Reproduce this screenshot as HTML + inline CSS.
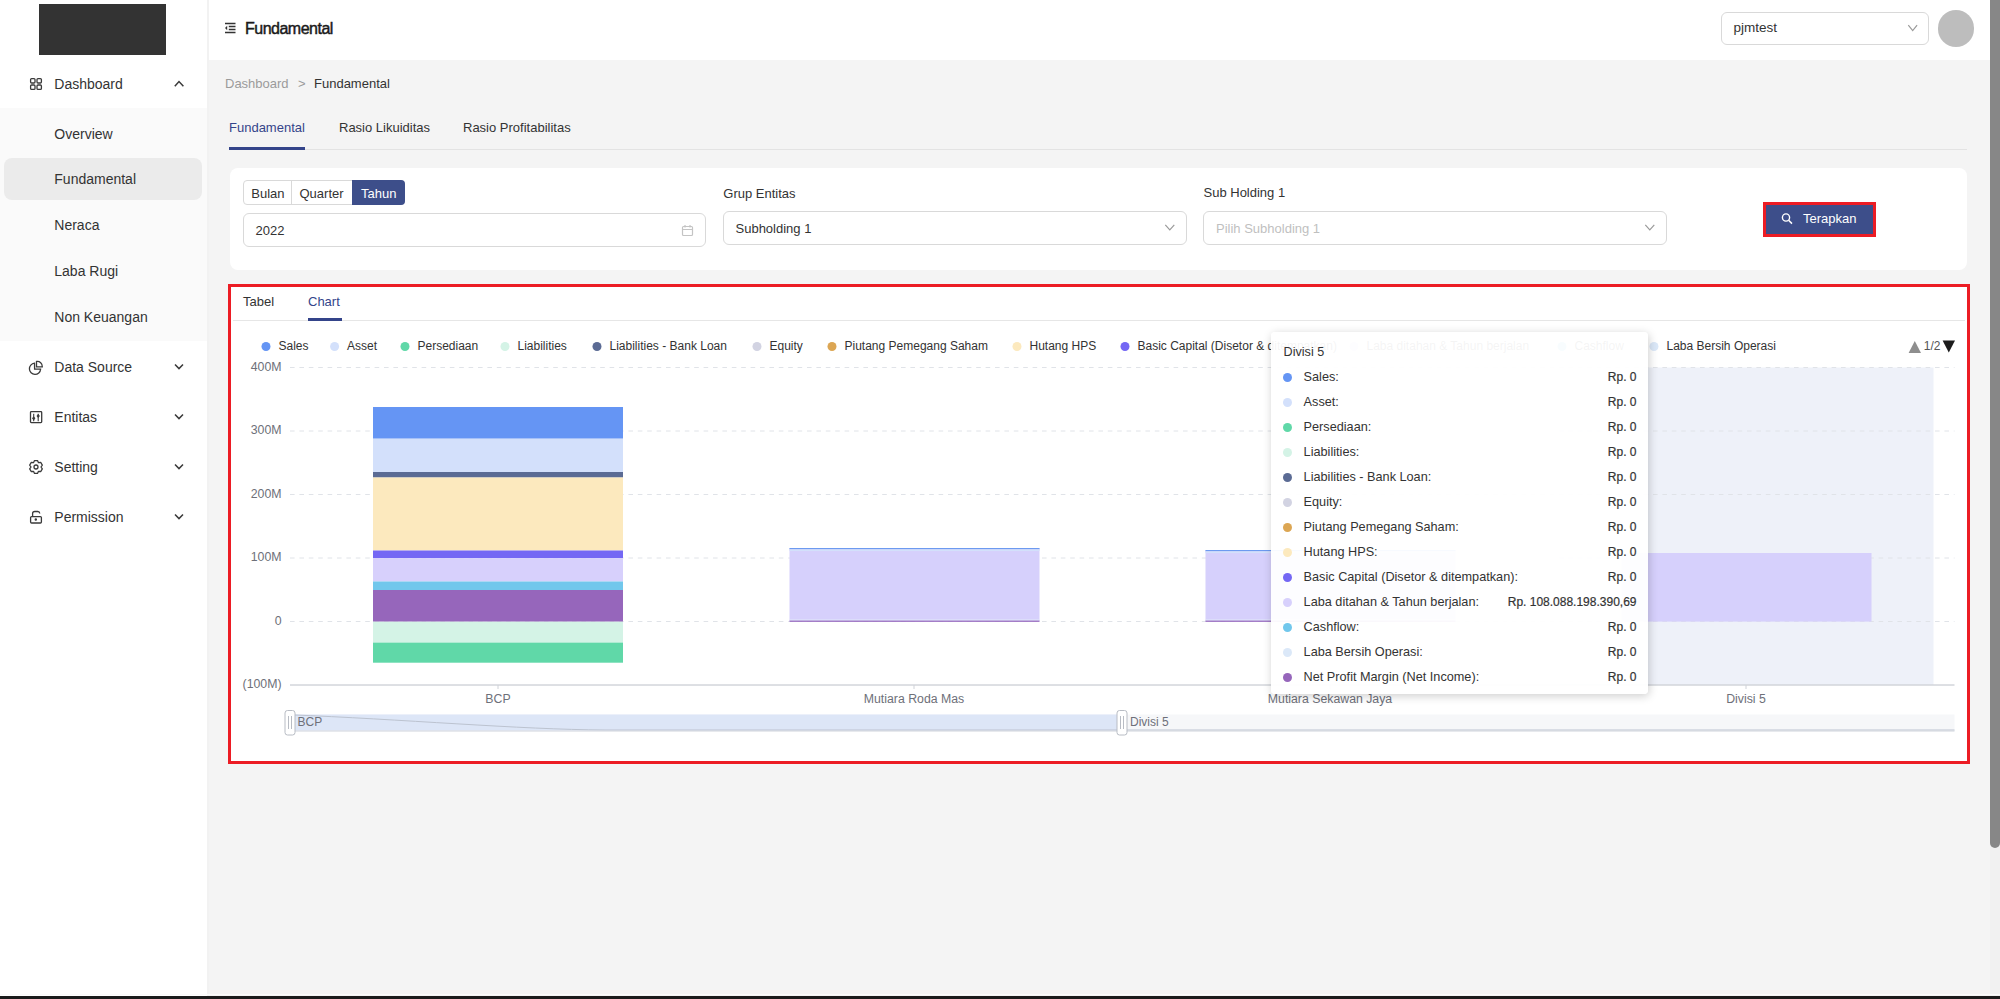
<!DOCTYPE html>
<html><head><meta charset="utf-8">
<style>
*{box-sizing:border-box;margin:0;padding:0}
html,body{width:2000px;height:999px;overflow:hidden;background:#f4f4f4;font-family:"Liberation Sans",sans-serif;color:#333}
.abs{position:absolute}
.t{position:absolute;white-space:nowrap;line-height:1}
svg{position:absolute;left:0;top:0;overflow:visible}
</style></head>
<body>
<div class="abs" style="left:0;top:0;width:207px;height:996px;background:#fff"></div>
<div class="abs" style="left:207px;top:0;width:2px;height:996px;background:#f2f2f2"></div>
<div class="abs" style="left:39px;top:4px;width:127px;height:51px;background:#333"></div>
<div class="abs" style="left:0;top:108px;width:207px;height:233px;background:#fafafa"></div>
<div class="abs" style="left:4px;top:158px;width:198px;height:42px;background:#ebebeb;border-radius:8px"></div>
<div class="abs" style="left:209px;top:0;width:1781px;height:60px;background:#fff"></div>
<div class="abs" style="left:1990px;top:0;width:10px;height:996px;background:#f1f1f1"></div>
<div class="abs" style="left:1990px;top:0;width:10px;height:848px;background:#878787;border-radius:0 0 5px 5px"></div>
<div class="abs" style="left:0;top:994px;width:2000px;height:1px;background:#fbfbfb"></div>
<div class="abs" style="left:0;top:995.5px;width:2000px;height:3.5px;background:#1b1b1b"></div>
<div class="t" style="left:54.3px;top:77.05px;font-size:14px;color:#333;">Dashboard</div>
<div class="t" style="left:54.3px;top:126.95px;font-size:14px;color:#333;">Overview</div>
<div class="t" style="left:54.3px;top:172.25px;font-size:14px;color:#333;">Fundamental</div>
<div class="t" style="left:54.3px;top:218.15px;font-size:14px;color:#333;">Neraca</div>
<div class="t" style="left:54.3px;top:263.75px;font-size:14px;color:#333;">Laba Rugi</div>
<div class="t" style="left:54.3px;top:310.25px;font-size:14px;color:#333;">Non Keuangan</div>
<div class="t" style="left:54.3px;top:359.65px;font-size:14px;color:#333;">Data Source</div>
<div class="t" style="left:54.3px;top:410.05px;font-size:14px;color:#333;">Entitas</div>
<div class="t" style="left:54.3px;top:460.05px;font-size:14px;color:#333;">Setting</div>
<div class="t" style="left:54.3px;top:510.15px;font-size:14px;color:#333;">Permission</div>
<svg width="2000" height="999">
  <g fill="none" stroke="#3a3a3a" stroke-width="1.3">
    <rect x="30.6" y="78.6" width="4.4" height="4.4" rx="1"/>
    <rect x="37" y="78.6" width="4.4" height="4.4" rx="1"/>
    <rect x="30.6" y="85" width="4.4" height="4.4" rx="1"/>
    <rect x="37" y="85" width="4.4" height="4.4" rx="1"/>
    <path d="M174.8 86.3 L179 81.6 L183.4 86.3" stroke-width="1.5"/>
    <path d="M175 364.5 L179 368.6 L183 364.5" stroke-width="1.5"/>
    <path d="M175 414.5 L179 418.6 L183 414.5" stroke-width="1.5"/>
    <path d="M175 464.5 L179 468.6 L183 464.5" stroke-width="1.5"/>
    <path d="M175 514.5 L179 518.6 L183 514.5" stroke-width="1.5"/>
    <path d="M34.5 363.2 A5.6 5.6 0 1 0 40.6 369.2 L34.6 369.2 Z"/>
    <path d="M36.5 361.5 A5 5 0 0 1 42.3 366.8 L36.5 366.8 Z"/>
    <rect x="30.5" y="411.6" width="11.2" height="11" rx="0.8"/>
    <path d="M33.7 413.8 V421.2 M38.2 413.8 V421.2" stroke-width="1.1"/>
    <path d="M33.7 416.2 L35.4 418.3 L33.7 420.4 L32 418.3 Z M38.2 413.9 L39.9 416 L38.2 418.1 L36.5 416 Z" fill="#3a3a3a" stroke="none"/>
    <path d="M33.50 462.67 L34.52 460.57 L37.48 460.57 L38.50 462.67 L40.83 462.50 L42.31 465.07 L41.00 467.00 L42.31 468.93 L40.83 471.50 L38.50 471.33 L37.48 473.43 L34.52 473.43 L33.50 471.33 L31.17 471.50 L29.69 468.93 L31.00 467.00 L29.69 465.07 L31.17 462.50 Z" stroke-linejoin="round"/>
    <circle cx="36" cy="467" r="2"/>
    <path d="M32.6 516.6 V513.6 Q32.6 511.5 34.8 511.5 H37.8 Q39.6 511.5 39.8 513.5"/>
    <rect x="30.6" y="516.6" width="10.8" height="6.4" rx="1"/>
    <circle cx="35.8" cy="519.6" r="0.6" fill="#3a3a3a"/>
    <path d="M225 23.5 H235.5 M228.8 26.5 H235.5 M228.8 29.5 H235.5 M225 32.5 H235.5" stroke="#333" stroke-width="1.4"/>
    <path d="M227.2 25.8 L225 28 L227.2 30.2 Z" fill="#333" stroke="none"/>
  </g>
</svg>
<div class="t" style="left:245px;top:20.66px;font-size:16px;color:#1a1a1a;letter-spacing:-0.5px;-webkit-text-stroke:0.45px #1a1a1a;">Fundamental</div>
<div class="abs" style="left:1721px;top:12px;width:208px;height:33px;background:#fff;border:1px solid #d9d9d9;border-radius:6px"></div>
<div class="t" style="left:1733.5px;top:20.97px;font-size:13.5px;color:#333;">pjmtest</div>
<div class="abs" style="left:1937.7px;top:10.4px;width:36.4px;height:36.4px;border-radius:50%;background:#bdbdbd"></div>
<div class="t" style="left:225px;top:77.00px;font-size:13px;color:#9b9b9b;">Dashboard</div>
<div class="t" style="left:298px;top:77.00px;font-size:13px;color:#9b9b9b;">&gt;</div>
<div class="t" style="left:314px;top:77.00px;font-size:13px;color:#333;">Fundamental</div>
<div class="abs" style="left:229px;top:149px;width:1738px;height:1px;background:#e3e3e3"></div>
<div class="abs" style="left:229px;top:147px;width:76px;height:3px;background:#34448a"></div>
<div class="t" style="left:229px;top:121.00px;font-size:13px;color:#34448a;">Fundamental</div>
<div class="t" style="left:339px;top:121.00px;font-size:13px;color:#333;">Rasio Likuiditas</div>
<div class="t" style="left:463px;top:121.00px;font-size:13px;color:#333;">Rasio Profitabilitas</div>
<div class="abs" style="left:230px;top:168px;width:1737px;height:102px;background:#fff;border-radius:8px"></div>
<div class="abs" style="left:243px;top:180px;width:162px;height:25px;border:1px solid #d9d9d9;border-radius:4px;background:#fff"></div>
<div class="abs" style="left:291px;top:180px;width:1px;height:25px;background:#d9d9d9"></div>
<div class="abs" style="left:352px;top:180px;width:53px;height:25px;background:#3d4e8a;border-radius:0 4px 4px 0"></div>
<div class="t" style="left:251.3px;top:186.50px;font-size:13px;color:#333;">Bulan</div>
<div class="t" style="left:299.5px;top:186.50px;font-size:13px;color:#333;">Quarter</div>
<div class="t" style="left:361px;top:186.50px;font-size:13px;color:#fff;">Tahun</div>
<div class="abs" style="left:243px;top:213px;width:463px;height:34px;background:#fff;border:1px solid #d9d9d9;border-radius:6px"></div>
<div class="t" style="left:255.5px;top:224.00px;font-size:13px;color:#333;">2022</div>
<div class="t" style="left:723.3px;top:186.50px;font-size:13px;color:#333;">Grup Entitas</div>
<div class="abs" style="left:723px;top:211px;width:464px;height:34px;background:#fff;border:1px solid #d9d9d9;border-radius:6px"></div>
<div class="t" style="left:735.5px;top:222.00px;font-size:13px;color:#333;">Subholding 1</div>
<div class="t" style="left:1203.5px;top:186.30px;font-size:13px;color:#333;">Sub Holding 1</div>
<div class="abs" style="left:1203px;top:211px;width:464px;height:34px;background:#fff;border:1px solid #d9d9d9;border-radius:6px"></div>
<div class="t" style="left:1216px;top:222.00px;font-size:13px;color:#bfbfbf;">Pilih Subholding 1</div>
<div class="abs" style="left:1763px;top:202px;width:113px;height:35px;background:#3d4e8a;border:3px solid #ec1c24"></div>
<div class="t" style="left:1803px;top:212.40px;font-size:13px;color:#fff;">Terapkan</div>
<svg width="2000" height="999">
  <g fill="none" stroke-width="1.2">
    <rect x="682.5" y="226.5" width="10" height="9" rx="1" stroke="#c4c4c4"/>
    <path d="M682.5 229.5 H692.5 M685 225 V227.5 M690 225 V227.5" stroke="#c4c4c4"/>
    <path d="M1165.3 224.8 L1169.8 229.8 L1174.3 224.8" stroke="#9a9a9a"/>
    <path d="M1645.3 224.8 L1649.8 229.8 L1654.3 224.8" stroke="#9a9a9a"/>
    <path d="M1908.3 25.2 L1912.7 30.6 L1917.1 25.2" stroke="#9a9a9a"/>
    <circle cx="1786" cy="217.5" r="3.6" stroke="#fff" stroke-width="1.4"/>
    <path d="M1788.6 220.2 L1792 223.6" stroke="#fff" stroke-width="1.5"/>
  </g>
</svg>
<div class="abs" style="left:228px;top:284px;width:1742px;height:480px;background:#fff;border:3px solid #ec1c24"></div>
<div class="abs" style="left:233px;top:320px;width:1732px;height:1px;background:#e6e6e6"></div>
<div class="abs" style="left:308px;top:318px;width:34px;height:3px;background:#34448a"></div>
<div class="t" style="left:243px;top:295.20px;font-size:13px;color:#333;">Tabel</div>
<div class="t" style="left:308px;top:295.20px;font-size:13px;color:#34448a;">Chart</div>
<svg width="2000" height="999">
<rect x="1559.5" y="367.5" width="374" height="317" fill="#eef1f9"/>
<line x1="290" y1="367.5" x2="1954.5" y2="367.5" stroke="#e0e3e8" stroke-width="1" stroke-dasharray="4.6 4.8"/>
<line x1="290" y1="431" x2="1954.5" y2="431" stroke="#e0e3e8" stroke-width="1" stroke-dasharray="4.6 4.8"/>
<line x1="290" y1="494.5" x2="1954.5" y2="494.5" stroke="#e0e3e8" stroke-width="1" stroke-dasharray="4.6 4.8"/>
<line x1="290" y1="558" x2="1954.5" y2="558" stroke="#e0e3e8" stroke-width="1" stroke-dasharray="4.6 4.8"/>
<line x1="290" y1="621.5" x2="1954.5" y2="621.5" stroke="#e0e3e8" stroke-width="1" stroke-dasharray="4.6 4.8"/>
<line x1="290" y1="685" x2="1954.5" y2="685" stroke="#bcc0c8" stroke-width="1"/>
<line x1="498" y1="685" x2="498" y2="689" stroke="#cfd2d8" stroke-width="1"/>
<line x1="914" y1="685" x2="914" y2="689" stroke="#cfd2d8" stroke-width="1"/>
<line x1="1330" y1="685" x2="1330" y2="689" stroke="#cfd2d8" stroke-width="1"/>
<line x1="1746" y1="685" x2="1746" y2="689" stroke="#cfd2d8" stroke-width="1"/>
<text x="281.5" y="370.9" text-anchor="end" font-size="12.3" fill="#6e7079">400M</text>
<text x="281.5" y="434.4" text-anchor="end" font-size="12.3" fill="#6e7079">300M</text>
<text x="281.5" y="497.9" text-anchor="end" font-size="12.3" fill="#6e7079">200M</text>
<text x="281.5" y="561.4" text-anchor="end" font-size="12.3" fill="#6e7079">100M</text>
<text x="281.5" y="624.9" text-anchor="end" font-size="12.3" fill="#6e7079">0</text>
<text x="281.5" y="688.4" text-anchor="end" font-size="12.3" fill="#6e7079">(100M)</text>
<text x="498" y="702.5" text-anchor="middle" font-size="12.3" fill="#6e7079">BCP</text>
<text x="914" y="702.5" text-anchor="middle" font-size="12.3" fill="#6e7079">Mutiara Roda Mas</text>
<text x="1330" y="702.5" text-anchor="middle" font-size="12.3" fill="#6e7079">Mutiara Sekawan Jaya</text>
<text x="1746" y="702.5" text-anchor="middle" font-size="12.3" fill="#6e7079">Divisi 5</text>
<rect x="373" y="407" width="250" height="31.70" fill="#6595f4"/>
<rect x="373" y="438.7" width="250" height="33.30" fill="#d3e0fb"/>
<rect x="373" y="472" width="250" height="5.50" fill="#5b6b94"/>
<rect x="373" y="477.5" width="250" height="73.00" fill="#fce9be"/>
<rect x="373" y="550.5" width="250" height="7.70" fill="#7467f4"/>
<rect x="373" y="558.2" width="250" height="23.30" fill="#d7d0fc"/>
<rect x="373" y="581.5" width="250" height="8.50" fill="#71c7ec"/>
<rect x="373" y="590" width="250" height="31.70" fill="#9666bb"/>
<rect x="373" y="621.7" width="250" height="20.90" fill="#d4f3e6"/>
<rect x="373" y="642.6" width="250" height="20.10" fill="#60d8a8"/>
<rect x="789.5" y="548" width="250" height="73.60000000000002" fill="#d6d0fc"/>
<rect x="789.5" y="548" width="250" height="1.3" fill="#6d9af0"/>
<rect x="789.5" y="549.3" width="250" height="1.8" fill="#d3e0fb"/>
<rect x="789.5" y="619.6" width="250" height="1" fill="#e6f0fb"/>
<rect x="789.5" y="620.6" width="250" height="1.2" fill="#9666bb"/>
<rect x="1205.5" y="550" width="250" height="71.60000000000002" fill="#d6d0fc"/>
<rect x="1205.5" y="550" width="250" height="1.3" fill="#6d9af0"/>
<rect x="1205.5" y="551.3" width="250" height="1.8" fill="#d3e0fb"/>
<rect x="1205.5" y="619.6" width="250" height="1" fill="#e6f0fb"/>
<rect x="1205.5" y="620.6" width="250" height="1.2" fill="#9666bb"/>
<rect x="1621.5" y="553" width="250" height="68.60000000000002" fill="#d6d0fc"/>
<rect x="290" y="714.5" width="1664.5" height="16" fill="#f6f7f9"/>
<rect x="290" y="714.5" width="832" height="16" fill="#dde6f7"/>
<path d="M290 714.8 C 400 719, 520 729.6, 605 730 L 1954.5 730" fill="none" stroke="#bcc3d0" stroke-width="1"/>
<line x1="290" y1="731" x2="1954.5" y2="731" stroke="#d0d4dc" stroke-width="1"/>
<rect x="285" y="710.5" width="10" height="24.5" rx="2.5" fill="#fff" stroke="#b8bcc4" stroke-width="1"/>
<line x1="288.5" y1="716" x2="288.5" y2="729" stroke="#b8bcc4" stroke-width="1"/>
<line x1="291.5" y1="716" x2="291.5" y2="729" stroke="#b8bcc4" stroke-width="1"/>
<rect x="1117" y="710.5" width="10" height="24.5" rx="2.5" fill="#fff" stroke="#b8bcc4" stroke-width="1"/>
<line x1="1120.5" y1="716" x2="1120.5" y2="729" stroke="#b8bcc4" stroke-width="1"/>
<line x1="1123.5" y1="716" x2="1123.5" y2="729" stroke="#b8bcc4" stroke-width="1"/>
<text x="297.5" y="726" font-size="12" fill="#6e7079">BCP</text>
<text x="1130" y="726" font-size="12" fill="#6e7079">Divisi 5</text>
<circle cx="266" cy="346.5" r="4.5" fill="#6595f4"/>
<text x="278.5" y="350" font-size="12" fill="#333">Sales</text>
<circle cx="334.6" cy="346.5" r="4.5" fill="#d3e0fb"/>
<text x="347.1" y="350" font-size="12" fill="#333">Asset</text>
<circle cx="405" cy="346.5" r="4.5" fill="#60d8a8"/>
<text x="417.5" y="350" font-size="12" fill="#333">Persediaan</text>
<circle cx="505" cy="346.5" r="4.5" fill="#d4f3e6"/>
<text x="517.5" y="350" font-size="12" fill="#333">Liabilities</text>
<circle cx="597" cy="346.5" r="4.5" fill="#5b6b94"/>
<text x="609.5" y="350" font-size="12" fill="#333">Liabilities - Bank Loan</text>
<circle cx="757" cy="346.5" r="4.5" fill="#d2d3e2"/>
<text x="769.5" y="350" font-size="12" fill="#333">Equity</text>
<circle cx="832" cy="346.5" r="4.5" fill="#dca653"/>
<text x="844.5" y="350" font-size="12" fill="#333">Piutang Pemegang Saham</text>
<circle cx="1017" cy="346.5" r="4.5" fill="#fce9be"/>
<text x="1029.5" y="350" font-size="12" fill="#333">Hutang HPS</text>
<circle cx="1125" cy="346.5" r="4.5" fill="#7467f4"/>
<text x="1137.5" y="350" font-size="12" fill="#333">Basic Capital (Disetor &amp; ditempatkan)</text>
<circle cx="1354" cy="346.5" r="4.5" fill="#d7d0fc"/>
<text x="1366.5" y="350" font-size="12" fill="#333">Laba ditahan &amp; Tahun berjalan</text>
<circle cx="1562" cy="346.5" r="4.5" fill="#71c7ec"/>
<text x="1574.5" y="350" font-size="12" fill="#333">Cashflow</text>
<circle cx="1654" cy="346.5" r="4.5" fill="#dbe8f8"/>
<text x="1666.5" y="350" font-size="12" fill="#333">Laba Bersih Operasi</text>
<path d="M1908.6 353 L1914.8 341 L1921 353 Z" fill="#8e8e8e"/>
<text x="1923.8" y="350" font-size="12" fill="#555">1/2</text>
<path d="M1942.6 340.6 L1955 340.6 L1948.8 352.6 Z" fill="#1c1c1c"/>
</svg>
<div class="abs" style="left:1271px;top:332px;width:377px;height:362px;background:rgba(255,255,255,0.95);border-radius:4px;box-shadow:1px 2px 10px rgba(0,0,0,0.2)"></div>
<div class="t" style="left:1283.6px;top:346.33px;font-size:12.6px;color:#333;">Divisi 5</div>
<div class="abs" style="left:1283px;top:372.5px;width:9px;height:9px;border-radius:50%;background:#6595f4"></div>
<div class="t" style="left:1303.6px;top:370.85px;font-size:12.7px;color:#333;">Sales:</div>
<div class="t" style="right:363.5px;top:371.44px;font-size:12px;color:#333;-webkit-text-stroke:0.2px #333">Rp. 0</div>
<div class="abs" style="left:1283px;top:397.5px;width:9px;height:9px;border-radius:50%;background:#d3e0fb"></div>
<div class="t" style="left:1303.6px;top:395.85px;font-size:12.7px;color:#333;">Asset:</div>
<div class="t" style="right:363.5px;top:396.44px;font-size:12px;color:#333;-webkit-text-stroke:0.2px #333">Rp. 0</div>
<div class="abs" style="left:1283px;top:422.5px;width:9px;height:9px;border-radius:50%;background:#60d8a8"></div>
<div class="t" style="left:1303.6px;top:420.85px;font-size:12.7px;color:#333;">Persediaan:</div>
<div class="t" style="right:363.5px;top:421.44px;font-size:12px;color:#333;-webkit-text-stroke:0.2px #333">Rp. 0</div>
<div class="abs" style="left:1283px;top:447.5px;width:9px;height:9px;border-radius:50%;background:#d4f3e6"></div>
<div class="t" style="left:1303.6px;top:445.85px;font-size:12.7px;color:#333;">Liabilities:</div>
<div class="t" style="right:363.5px;top:446.44px;font-size:12px;color:#333;-webkit-text-stroke:0.2px #333">Rp. 0</div>
<div class="abs" style="left:1283px;top:472.5px;width:9px;height:9px;border-radius:50%;background:#5b6b94"></div>
<div class="t" style="left:1303.6px;top:470.85px;font-size:12.7px;color:#333;">Liabilities - Bank Loan:</div>
<div class="t" style="right:363.5px;top:471.44px;font-size:12px;color:#333;-webkit-text-stroke:0.2px #333">Rp. 0</div>
<div class="abs" style="left:1283px;top:497.5px;width:9px;height:9px;border-radius:50%;background:#d2d3e2"></div>
<div class="t" style="left:1303.6px;top:495.85px;font-size:12.7px;color:#333;">Equity:</div>
<div class="t" style="right:363.5px;top:496.44px;font-size:12px;color:#333;-webkit-text-stroke:0.2px #333">Rp. 0</div>
<div class="abs" style="left:1283px;top:522.5px;width:9px;height:9px;border-radius:50%;background:#dca653"></div>
<div class="t" style="left:1303.6px;top:520.85px;font-size:12.7px;color:#333;">Piutang Pemegang Saham:</div>
<div class="t" style="right:363.5px;top:521.44px;font-size:12px;color:#333;-webkit-text-stroke:0.2px #333">Rp. 0</div>
<div class="abs" style="left:1283px;top:547.5px;width:9px;height:9px;border-radius:50%;background:#fce9be"></div>
<div class="t" style="left:1303.6px;top:545.85px;font-size:12.7px;color:#333;">Hutang HPS:</div>
<div class="t" style="right:363.5px;top:546.44px;font-size:12px;color:#333;-webkit-text-stroke:0.2px #333">Rp. 0</div>
<div class="abs" style="left:1283px;top:572.5px;width:9px;height:9px;border-radius:50%;background:#7467f4"></div>
<div class="t" style="left:1303.6px;top:570.85px;font-size:12.7px;color:#333;">Basic Capital (Disetor &amp; ditempatkan):</div>
<div class="t" style="right:363.5px;top:571.44px;font-size:12px;color:#333;-webkit-text-stroke:0.2px #333">Rp. 0</div>
<div class="abs" style="left:1283px;top:597.5px;width:9px;height:9px;border-radius:50%;background:#d7d0fc"></div>
<div class="t" style="left:1303.6px;top:595.85px;font-size:12.7px;color:#333;">Laba ditahan &amp; Tahun berjalan:</div>
<div class="t" style="right:363.5px;top:596.44px;font-size:12px;color:#333;-webkit-text-stroke:0.2px #333">Rp. 108.088.198.390,69</div>
<div class="abs" style="left:1283px;top:622.5px;width:9px;height:9px;border-radius:50%;background:#71c7ec"></div>
<div class="t" style="left:1303.6px;top:620.85px;font-size:12.7px;color:#333;">Cashflow:</div>
<div class="t" style="right:363.5px;top:621.44px;font-size:12px;color:#333;-webkit-text-stroke:0.2px #333">Rp. 0</div>
<div class="abs" style="left:1283px;top:647.5px;width:9px;height:9px;border-radius:50%;background:#dbe8f8"></div>
<div class="t" style="left:1303.6px;top:645.85px;font-size:12.7px;color:#333;">Laba Bersih Operasi:</div>
<div class="t" style="right:363.5px;top:646.44px;font-size:12px;color:#333;-webkit-text-stroke:0.2px #333">Rp. 0</div>
<div class="abs" style="left:1283px;top:672.5px;width:9px;height:9px;border-radius:50%;background:#9666bb"></div>
<div class="t" style="left:1303.6px;top:670.85px;font-size:12.7px;color:#333;">Net Profit Margin (Net Income):</div>
<div class="t" style="right:363.5px;top:671.44px;font-size:12px;color:#333;-webkit-text-stroke:0.2px #333">Rp. 0</div>
</body></html>
